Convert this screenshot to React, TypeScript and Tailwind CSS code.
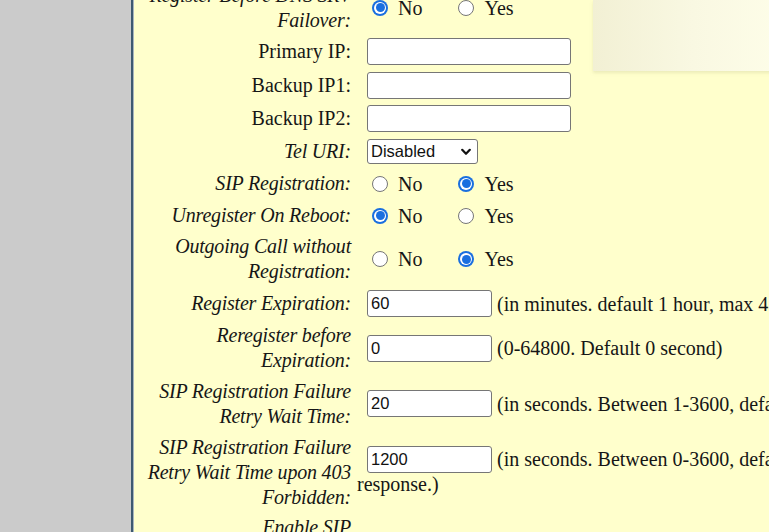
import React from "react";

const serif = { fontFamily: '"Liberation Serif", "Times New Roman", serif' };

function Radio({ checked, className = "" }: { checked?: boolean; className?: string }) {
  if (checked) {
    return (
      <span className={`inline-flex shrink-0 w-[16px] h-[16px] rounded-full bg-[#1a6fdf] items-center justify-center ${className}`}>
        <span className="w-[12px] h-[12px] rounded-full bg-white flex items-center justify-center">
          <span className="w-[9px] h-[9px] rounded-full bg-[#1a6fdf]" />
        </span>
      </span>
    );
  }
  return (
    <span className={`inline-block shrink-0 w-[16px] h-[16px] rounded-full bg-white border border-[#767676] ${className}`} />
  );
}

function RadioPair({ yes }: { yes: boolean }) {
  return (
    <div className="flex items-center">
      <Radio checked={!yes} className="ml-[15px]" />
      <span className="ml-[10px]">No</span>
      <Radio checked={yes} className="ml-[36px]" />
      <span className="ml-[10px]">Yes</span>
    </div>
  );
}

function TextBox({ value = "", short }: { value?: string; short?: boolean }) {
  return (
    <div
      className={`ml-[10px] shrink-0 h-[27px] ${short ? "w-[125px]" : "w-[204px]"} bg-white border border-[#767676] rounded-[3px] flex items-center pl-[3px] text-[16.5px] text-[#111]`}
      style={{ fontFamily: '"Liberation Sans", Arial, sans-serif' }}
    >
      {value}
    </div>
  );
}

function Row({
  h,
  label,
  italic = true,
  children,
}: {
  h: string;
  label: React.ReactNode;
  italic?: boolean;
  children?: React.ReactNode;
}) {
  return (
    <div className={`flex items-center ${h}`}>
      <div className={`w-[218px] shrink-0 text-right leading-[25px] pr-[1px] ${italic ? "italic tracking-[-0.2px]" : ""}`}>{label}</div>
      <div className="ml-[5px] flex items-center whitespace-nowrap">{children}</div>
    </div>
  );
}

function Note({ children }: { children: React.ReactNode }) {
  return <span className="ml-[5px] whitespace-nowrap">{children}</span>;
}

export default function App() {
  return (
    <div className="w-[769px] h-[532px] overflow-hidden flex bg-[#ffffcc]" style={serif}>
      <div className="w-[131px] shrink-0 bg-[#cbcbcb]" />
      <div className="w-[2px] shrink-0 bg-[#3e5970]" />
      <div className="w-[1px] shrink-0 bg-[#a9b6bd]" />
      <div className="relative flex-1 bg-[#ffffcc] text-[20px] text-[#161616] overflow-hidden">
        <div className="absolute left-[459px] top-0 w-[200px] h-[71px] bg-gradient-to-r from-[#f2f0d4] via-[#f9f8e2] to-[#fefee9] shadow-[0_2px_3px_rgba(200,200,150,0.35)]" />
        <div className="relative -mt-[20px]">
          <Row h="h-[55px]" label={<>Register Before DNS SRV<br />Failover:</>}>
            <RadioPair yes={false} />
          </Row>
          <Row h="h-[33.5px]" italic={false} label="Primary IP:">
            <TextBox />
          </Row>
          <Row h="h-[33.5px]" italic={false} label="Backup IP1:">
            <TextBox />
          </Row>
          <Row h="h-[33.5px]" italic={false} label="Backup IP2:">
            <TextBox />
          </Row>
          <Row h="h-[32px]" label="Tel URI:">
            <div
              className="ml-[10px] relative w-[111px] h-[25px] bg-white border border-[#767676] rounded-[3px] flex items-center pl-[3px] text-[16.5px] text-[#111]"
              style={{ fontFamily: '"Liberation Sans", Arial, sans-serif' }}
            >
              Disabled
              <svg className="absolute right-[6px] top-[8px]" width="10" height="8" viewBox="0 0 10 8">
                <path d="M1.2 1.8 L5 5.8 L8.8 1.8" fill="none" stroke="#111" strokeWidth="2.2" strokeLinecap="round" strokeLinejoin="round" />
              </svg>
            </div>
          </Row>
          <Row h="h-[32px]" label="SIP Registration:">
            <RadioPair yes />
          </Row>
          <Row h="h-[32px]" label="Unregister On Reboot:">
            <RadioPair yes={false} />
          </Row>
          <Row h="h-[55px]" label={<>Outgoing Call without<br />Registration:</>}>
            <RadioPair yes />
          </Row>
          <Row h="h-[34px]" label="Register Expiration:">
            <TextBox short value="60" />
            <Note>(in minutes. default 1 hour, max 45 days)</Note>
          </Row>
          <Row h="h-[55px]" label={<>Reregister before<br />Expiration:</>}>
            <TextBox short value="0" />
            <Note>(0-64800. Default 0 second)</Note>
          </Row>
          <Row h="h-[56px]" label={<>SIP Registration Failure<br />Retry Wait Time:</>}>
            <TextBox short value="20" />
            <Note>(in seconds. Between 1-3600, default is 20)</Note>
          </Row>
          <div className="flex items-center h-[81px]">
            <div className="w-[218px] shrink-0 text-right leading-[25px] pr-[1px] italic tracking-[-0.2px]">
              SIP Registration Failure<br />Retry Wait Time upon 403<br />Forbidden:
            </div>
            <div className="ml-[5px] flex flex-col leading-[25px]">
              <div className="flex items-center h-[25px] whitespace-nowrap">
                <TextBox short value="1200" />
                <Note>(in seconds. Between 0-3600, default is 1200. 0 means no retry upon 403 Forbidden</Note>
              </div>
              <div className="whitespace-nowrap">response.)</div>
            </div>
          </div>
          <Row h="h-[55px]" label={<>Enable SIP<br />OPTIONS Keep Alive:</>}>
            <RadioPair yes={false} />
          </Row>
        </div>
      </div>
    </div>
  );
}
